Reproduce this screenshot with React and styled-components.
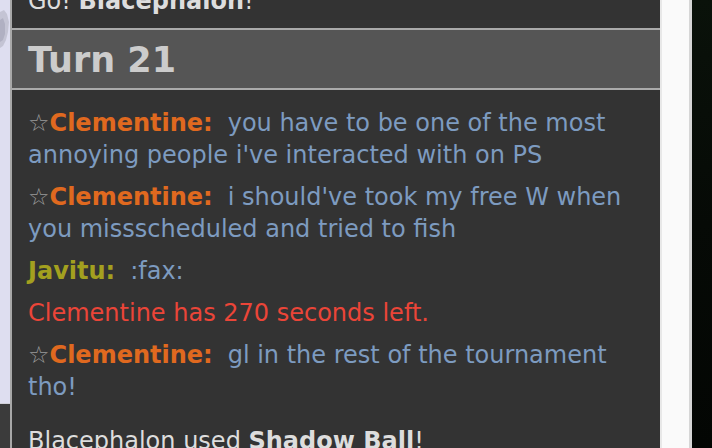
import React from "react";
import styled, { createGlobalStyle } from "styled-components";

const GlobalStyle = createGlobalStyle`
  html, body { margin: 0; padding: 0; background: #050905; overflow: hidden; }
  body { font-family: "DejaVu Sans", Verdana, sans-serif; }
`;

const Page = styled.div`
  display: flex;
  width: 712px;
  height: 448px;
  overflow: hidden;
`;

const LeftStrip = styled.div`
  width: 10px;
  display: flex;
  flex-direction: column;
  flex-shrink: 0;
`;

const SpriteArea = styled.div`
  flex: 1;
  background: #dedef0;
  position: relative;
  overflow: hidden;
`;

const SpriteBlob = styled.svg`
  position: absolute;
  left: 0;
  top: 6px;
`;

const BottomDock = styled.div`
  height: 44px;
  background: #3b3b3b;
  border-top: 1px solid #d0d0d8;
`;

const BattleLog = styled.div`
  width: 650px;
  flex-shrink: 0;
  box-sizing: border-box;
  border-left: 2px solid #a8a8a8;
  background: #333333;
  overflow: hidden;
  font-size: 24px;
  line-height: 32px;
`;

const BattleText = styled.div`
  color: #dddddd;
  padding: 0 16px;
  margin-top: ${(p) => p.$top || 0}px;
  white-space: nowrap;
  b { font-weight: bold; }
`;

const TurnHeader = styled.h2`
  margin: 11px 0 12px;
  padding: 10px 16px 8px;
  background: #555555;
  border-top: 2px solid #aaaaaa;
  border-bottom: 2px solid #aaaaaa;
  color: #cccccc;
  font-size: 35px;
  line-height: 40px;
  font-weight: bold;
`;

const ChatLine = styled.div`
  padding: 5px 16px;
  color: #7d9bc0;
`;

const Star = styled.span`
  color: #9a9a9a;
  font-weight: normal;
`;

const Name = styled.strong`
  color: ${(p) => p.$color};
  font-weight: bold;
  margin-right: 15px;
`;

const Message = styled.span`
  color: #7d9bc0;
`;

const Notice = styled.div`
  padding: 5px 16px;
  color: #eb4538;
`;

const Gutter = styled.div`
  width: 32px;
  flex-shrink: 0;
  box-sizing: border-box;
  background: #fafafa;
  border-left: 2px solid #e8e8e8;
  border-right: 3px solid #d6d6d6;
`;

const Backdrop = styled.div`
  flex: 1;
  background: linear-gradient(180deg, #0a120a 0%, #060a06 50%, #030603 100%);
`;

const messages = [
  { kind: "chat", star: true, name: "Clementine:", color: "#e0691f", text: "you have to be one of the most annoying people i've interacted with on PS" },
  { kind: "chat", star: true, name: "Clementine:", color: "#e0691f", text: "i should've took my free W when you missscheduled and tried to fish" },
  { kind: "chat", star: false, name: "Javitu:", color: "#a3a01f", text: ":fax:" },
  { kind: "notice", text: "Clementine has 270 seconds left." },
  { kind: "chat", star: true, name: "Clementine:", color: "#e0691f", text: "gl in the rest of the tournament tho!" },
];

export default function App() {
  return (
    <>
      <GlobalStyle />
      <Page>
        <LeftStrip>
          <SpriteArea>
            <SpriteBlob width="10" height="48" viewBox="0 0 10 48">
              <path d="M0 6 L4 4 L7 8 L9 16 L8 26 L6 34 L3 40 L0 42 Z" fill="#c4c4d4" />
              <path d="M0 14 L3 12 L5 18 L5 28 L3 34 L0 36 Z" fill="#b0b0c2" />
            </SpriteBlob>
          </SpriteArea>
          <BottomDock />
        </LeftStrip>
        <BattleLog>
          <BattleText $top={-15}>
            Go! <b>Blacephalon</b>!
          </BattleText>
          <TurnHeader>Turn 21</TurnHeader>
          {messages.map((m, i) =>
            m.kind === "chat" ? (
              <ChatLine key={i}>
                <strong>
                  {m.star && <Star>☆</Star>}
                  <Name $color={m.color}>{m.name}</Name>
                </strong>
                <Message>{m.text}</Message>
              </ChatLine>
            ) : (
              <Notice key={i}>{m.text}</Notice>
            )
          )}
          <BattleText $top={17}>
            Blacephalon used <b>Shadow Ball</b>!
          </BattleText>
        </BattleLog>
        <Gutter />
        <Backdrop />
      </Page>
    </>
  );
}
